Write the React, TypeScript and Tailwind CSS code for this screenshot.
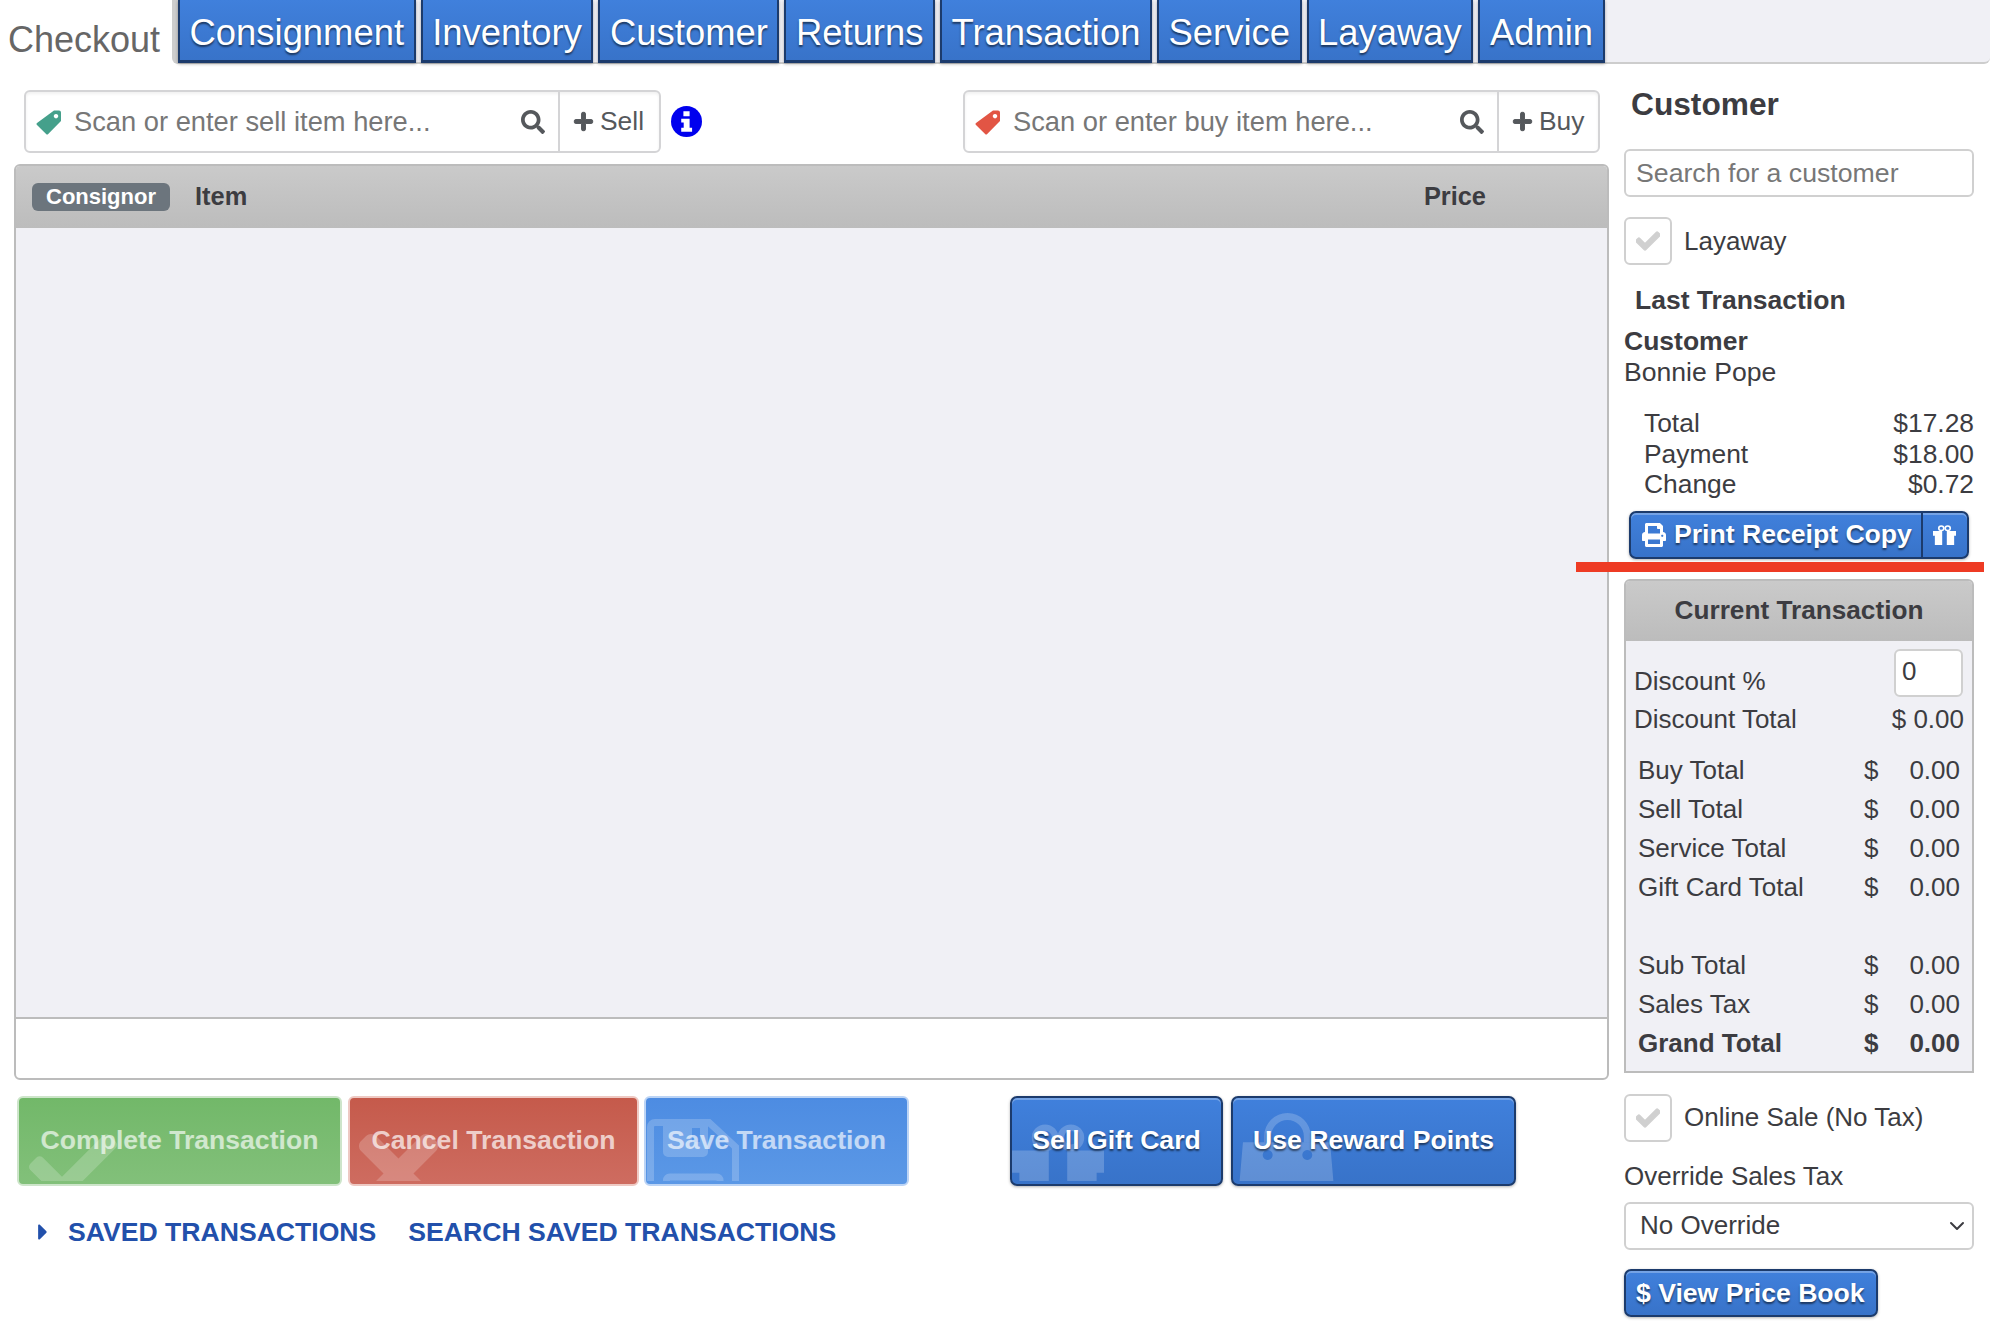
import type { ReactNode } from "react";
import { ChevronDown } from "lucide-react";
import { FaCaretRight, FaCheck, FaPlus, FaPrint, FaSearch, FaTimes } from "react-icons/fa";

const tabs = ["Consignment", "Inventory", "Customer", "Returns", "Transaction", "Service", "Layaway", "Admin"];

const totals = [
    { label: "Buy Total", amount: "0.00" },
    { label: "Sell Total", amount: "0.00" },
    { label: "Service Total", amount: "0.00" },
    { label: "Gift Card Total", amount: "0.00" },
    { label: "", amount: "" },
    { label: "Sub Total", amount: "0.00" },
    { label: "Sales Tax", amount: "0.00" },
    { label: "Grand Total", amount: "0.00", bold: true },
];

const blueButton =
    "rounded-[7px] border-2 border-[#1c3b6c] bg-linear-to-b from-[#4080dc] to-[#3873c9] font-bold text-white shadow-[inset_0_2px_0_rgba(255,255,255,0.28),0_1px_3px_rgba(0,0,0,0.3)] [text-shadow:0_2px_2px_rgba(0,0,0,0.55)]";

function TagIcon({ className }: { className: string }) {
    return (
        <svg viewBox="0 0 26 26" className={`h-[26px] w-[26px] shrink-0 ${className}`} fill="currentColor" fillRule="evenodd">
            <path d="M18 1.5H23a2 2 0 0 1 2 2V12L12.2 25a1.5 1.5 0 0 1-2.1 0L1 16a1.5 1.5 0 0 1 0-2.1ZM20 5a2.2 2.2 0 1 0 .01 0Z" />
        </svg>
    );
}

function InfoIcon() {
    return (
        <svg viewBox="0 0 100 100" className="ml-[10px] h-[31px] w-[31px] shrink-0">
            <circle cx="50" cy="50" r="50" fill="#0000ee" />
            <path fill="#fff" d="M40 17H60V33H40ZM33 41H60V70H68V83H33V70H41V53H33Z" />
        </svg>
    );
}

function GiftIcon({ className }: { className: string }) {
    return (
        <svg viewBox="0 0 100 100" preserveAspectRatio="none" className={className}>
            <circle cx="36" cy="16" r="11" fill="none" stroke="currentColor" strokeWidth="7" />
            <circle cx="64" cy="16" r="11" fill="none" stroke="currentColor" strokeWidth="7" />
            <path fill="currentColor" d="M0 30H40V54H0ZM60 30H100V54H60ZM8 54H40V100H8ZM60 54H92V100H60Z" />
        </svg>
    );
}

function SaveIcon({ className }: { className: string }) {
    return (
        <svg viewBox="0 0 92 80" className={className}>
            <g fill="none" stroke="currentColor" strokeWidth="7">
                <path d="M3.5 80V8a4.5 4.5 0 0 1 4.5-4.5H62L88.5 28V80" />
                <path d="M19.5 80V61a3 3 0 0 1 3-3H70a3 3 0 0 1 3 3V80" />
            </g>
            <path fill="currentColor" fillRule="evenodd" d="M16 7H61V33a5 5 0 0 1-5 5H21a5 5 0 0 1-5-5ZM45 9h8v14h-8Z" />
        </svg>
    );
}

function BagIcon({ className }: { className: string }) {
    return (
        <svg viewBox="0 0 100 100" className={className}>
            <path fill="none" stroke="currentColor" strokeWidth="7" d="M31 30V24a20 20 0 0 1 40 0V30" />
            <path
                fill="currentColor"
                fillRule="evenodd"
                d="M6 30H94L100 100H0ZM31 38a5 5 0 1 0 .01 0ZM71 38a5 5 0 1 0 .01 0Z"
            />
        </svg>
    );
}

function ScanBox({ placeholder, tag, action }: { placeholder: string; tag: ReactNode; action: string }) {
    return (
        <div className="flex h-[63px] w-[637px] rounded-[6px] border-2 border-[#d4d4d6] bg-white shadow-[inset_0_2px_3px_rgba(0,0,0,0.06)]">
            <div className="flex w-[532px] items-center pr-[13px] pl-[10px]">
                {tag}
                <input
                    placeholder={placeholder}
                    className="ml-[12px] min-w-0 flex-1 bg-transparent pt-[2px] text-[27.3px] outline-none placeholder:text-[#777]"
                />
                <FaSearch size={24} className="shrink-0 text-[#55585c]" />
            </div>
            <div className="flex flex-1 items-center gap-[6px] border-l-2 border-[#d4d4d6] pl-[13px] text-[26.4px] text-[#55585c]">
                <FaPlus size={21} className="stroke-current stroke-[24]" />
                {action}
            </div>
        </div>
    );
}

function ActionButton({ label, icon, className }: { label: string; icon: ReactNode; className: string }) {
    return (
        <button className={`relative flex h-[90px] items-center justify-center overflow-hidden text-[26.6px] font-bold ${className}`}>
            <span className="absolute inset-x-0 top-0 bottom-[3px] overflow-hidden text-white/20">{icon}</span>
            <span className="relative">{label}</span>
        </button>
    );
}

function CheckRow({ label }: { label: string }) {
    return (
        <div className="flex h-[48px] items-center gap-[12px]">
            <div className="flex h-[48px] w-[48px] items-center justify-center rounded-[6px] border-2 border-[#d0d0d0]">
                <FaCheck size={24} className="stroke-current stroke-[30] text-[#d0d0d0]" />
            </div>
            {label}
        </div>
    );
}

export default function App() {
    return (
        <div className="relative h-[1334px] w-[1990px] overflow-hidden bg-white font-['Liberation_Sans',Arial,sans-serif] text-[26px] text-[#3c3c41]">
            {/* tab bar */}
            <div className="flex h-[64px]">
                <div className="w-[172px] pl-[8px] text-[36px] leading-[80px] text-[#666]">Checkout</div>
                <nav className="flex flex-1 rounded-br-[6px] rounded-bl-[6px] border-b-2 border-l-[6px] border-[#cdcdcd] bg-[#f0f0f5]">
                    {tabs.map((tab) => (
                        <div
                            key={tab}
                            className="mr-[5px] -mb-[1px] flex h-[63px] items-center border-x-2 border-b-[3px] border-x-[#1c3b6c] border-b-[#1c3b6c] bg-linear-to-b from-[#4080dc] to-[#3873c9] px-[9.6px] pt-[7px] text-[36.4px] text-white shadow-[0_1px_3px_rgba(0,0,0,0.3)] [text-shadow:0_2px_2px_rgba(0,0,0,0.55)]"
                        >
                            {tab}
                        </div>
                    ))}
                </nav>
            </div>

            <div className="flex">
                {/* left column */}
                <div className="w-[1616px]">
                    <div className="mt-[26px] flex items-center pr-[16px] pl-[24px]">
                        <ScanBox placeholder="Scan or enter sell item here..." tag={<TagIcon className="text-[#45a08b]" />} action="Sell" />
                        <InfoIcon />
                        <div className="ml-auto">
                            <ScanBox placeholder="Scan or enter buy item here..." tag={<TagIcon className="text-[#e25544]" />} action="Buy" />
                        </div>
                    </div>

                    <div className="mx-[14px] mt-[11px] w-[1595px] overflow-hidden rounded-[6px] border-2 border-[#bcbcbc]">
                        <div className="flex h-[62px] items-center bg-linear-to-b from-[#cacaca] to-[#bcbcbc] pl-[16px] text-[25.4px] font-bold">
                            <span className="rounded-[6px] bg-[#6c757d] px-[14px] text-[22px] leading-[28px] text-white">Consignor</span>
                            <span className="ml-[25px] pb-[2px]">Item</span>
                            <span className="mr-[121px] ml-auto pb-[2px]">Price</span>
                        </div>
                        <div className="h-[791px] border-b-2 border-[#bcbcbc] bg-[#f0f0f5]" />
                        <div className="h-[59px]" />
                    </div>

                    <div className="mt-[16px] flex pl-[17px]">
                        <ActionButton
                            label="Complete Transaction"
                            className="w-[325px] rounded-[6px] border-2 border-[#cde5ca] bg-linear-to-b from-[#72b869] to-[#82c07a] text-white/65"
                            icon={<FaCheck size={88} className="absolute top-[25px] left-[10px]" />}
                        />
                        <ActionButton
                            label="Cancel Transaction"
                            className="ml-[6px] w-[291px] rounded-[6px] border-2 border-[#eec9c3] bg-linear-to-b from-[#c55a4b] to-[#ce6c60] text-white/70"
                            icon={<FaTimes size={115} className="absolute top-[18px] left-[-9px]" />}
                        />
                        <ActionButton
                            label="Save Transaction"
                            className="ml-[5px] w-[265px] rounded-[6px] border-2 border-[#bcd4f5] bg-linear-to-b from-[#4d8ce2] to-[#5b98e6] text-white/65"
                            icon={<SaveIcon className="absolute top-[21px] left-[1px] w-[92px]" />}
                        />
                        <ActionButton
                            label="Sell Gift Card"
                            className={`ml-[101px] w-[213px] ${blueButton}`}
                            icon={<GiftIcon className="absolute top-[25px] left-[0px] h-[92px] w-[92px]" />}
                        />
                        <ActionButton
                            label="Use Reward Points"
                            className={`ml-[8px] w-[285px] ${blueButton}`}
                            icon={<BagIcon className="absolute top-[14px] left-[4px] h-[100px] w-[99px]" />}
                        />
                    </div>

                    <div className="mt-[30px] flex items-center text-[26.6px] leading-[32px] font-bold text-[#2250ab]">
                        <FaCaretRight size={26} className="ml-[30px]" />
                        <span className="ml-[12px]">SAVED TRANSACTIONS</span>
                        <span className="ml-[32px]">SEARCH SAVED TRANSACTIONS</span>
                    </div>
                </div>

                {/* right column */}
                <div className="w-[358px] pl-[8px]">
                    <div className="pl-[7px] text-[31.7px] leading-[80px] font-bold">Customer</div>
                    <input
                        placeholder="Search for a customer"
                        className="mt-[5px] h-[48px] w-[350px] rounded-[6px] border-2 border-[#d0d0d0] px-[10px] text-[26.7px] outline-none placeholder:text-[#777]"
                    />
                    <div className="mt-[20px]">
                        <CheckRow label="Layaway" />
                    </div>
                    <div className="mt-[19px] pl-[11px] text-[26.5px] leading-[32px] font-bold">Last Transaction</div>
                    <div className="mt-[10px] text-[26.5px] leading-[31px] font-bold">Customer</div>
                    <div className="text-[26.6px] leading-[31px]">Bonnie Pope</div>

                    <div className="mt-[20px] pl-[20px] text-[26.4px] leading-[30.6px]">
                        <div className="flex justify-between"><span>Total</span><span>$17.28</span></div>
                        <div className="flex justify-between"><span>Payment</span><span>$18.00</span></div>
                        <div className="flex justify-between"><span>Change</span><span>$0.72</span></div>
                    </div>

                    <div className={`mt-[11.2px] ml-[5px] flex h-[48px] w-[340px] items-center ${blueButton}`}>
                        <div className="flex h-full w-[292px] items-center gap-[8px] border-r-2 border-[#1c3b6c] pl-[11px] text-[26.6px]">
                            <FaPrint size={24} />
                            Print Receipt Copy
                        </div>
                        <GiftIcon className="ml-[10px] h-[20px] w-[23px]" />
                    </div>

                    <div className="mt-[20px] h-[494px] w-[350px] overflow-hidden rounded-t-[6px] border-2 border-[#bcbcbc] bg-[#f0f0f5]">
                        <div className="flex h-[60px] items-center justify-center bg-linear-to-b from-[#cacaca] to-[#bcbcbc] text-[26.2px] font-bold">
                            Current Transaction
                        </div>
                        <div className="mt-[8px] flex items-end justify-between pr-[9px] pl-[8px] leading-[32px]">
                            <span>Discount %</span>
                            <input
                                defaultValue="0"
                                className="h-[48px] w-[69px] rounded-[6px] border-2 border-[#d0d0d0] bg-white pb-[3px] pl-[6px] outline-none"
                            />
                        </div>
                        <div className="mt-[6px] flex justify-between pr-[8px] pl-[8px] leading-[32px]">
                            <span>Discount Total</span>
                            <span>$ 0.00</span>
                        </div>
                        <div className="mt-[16px] pr-[12px] pl-[12px]">
                            {totals.map((row, i) => (
                                <div key={i} className={`grid h-[39px] grid-cols-[226px_1fr_auto] items-center ${row.bold ? "font-bold" : ""}`}>
                                    <span>{row.label}</span>
                                    <span>{row.amount && "$"}</span>
                                    <span>{row.amount}</span>
                                </div>
                            ))}
                        </div>
                    </div>

                    <div className="mt-[21px]">
                        <CheckRow label="Online Sale (No Tax)" />
                    </div>
                    <div className="mt-[18px] leading-[32px]">Override Sales Tax</div>
                    <div className="relative mt-[10px] w-[350px]">
                        <select className="h-[48px] w-[350px] appearance-none rounded-[6px] border-2 border-[#d0d0d0] bg-white pl-[14px] text-[26px] outline-none">
                            <option>No Override</option>
                        </select>
                        <ChevronDown size={24} strokeWidth={2} className="absolute top-[12px] right-[5px]" />
                    </div>
                    <div className={`mt-[19px] flex h-[48px] w-[254px] items-center pt-[2px] pl-[10px] text-[26.6px] ${blueButton}`}>$ View Price Book</div>
                </div>
            </div>

            {/* red annotation line */}
            <div className="absolute top-[562px] left-[1576px] h-[10px] w-[408px] bg-[#ee3b24]" />
        </div>
    );
}
